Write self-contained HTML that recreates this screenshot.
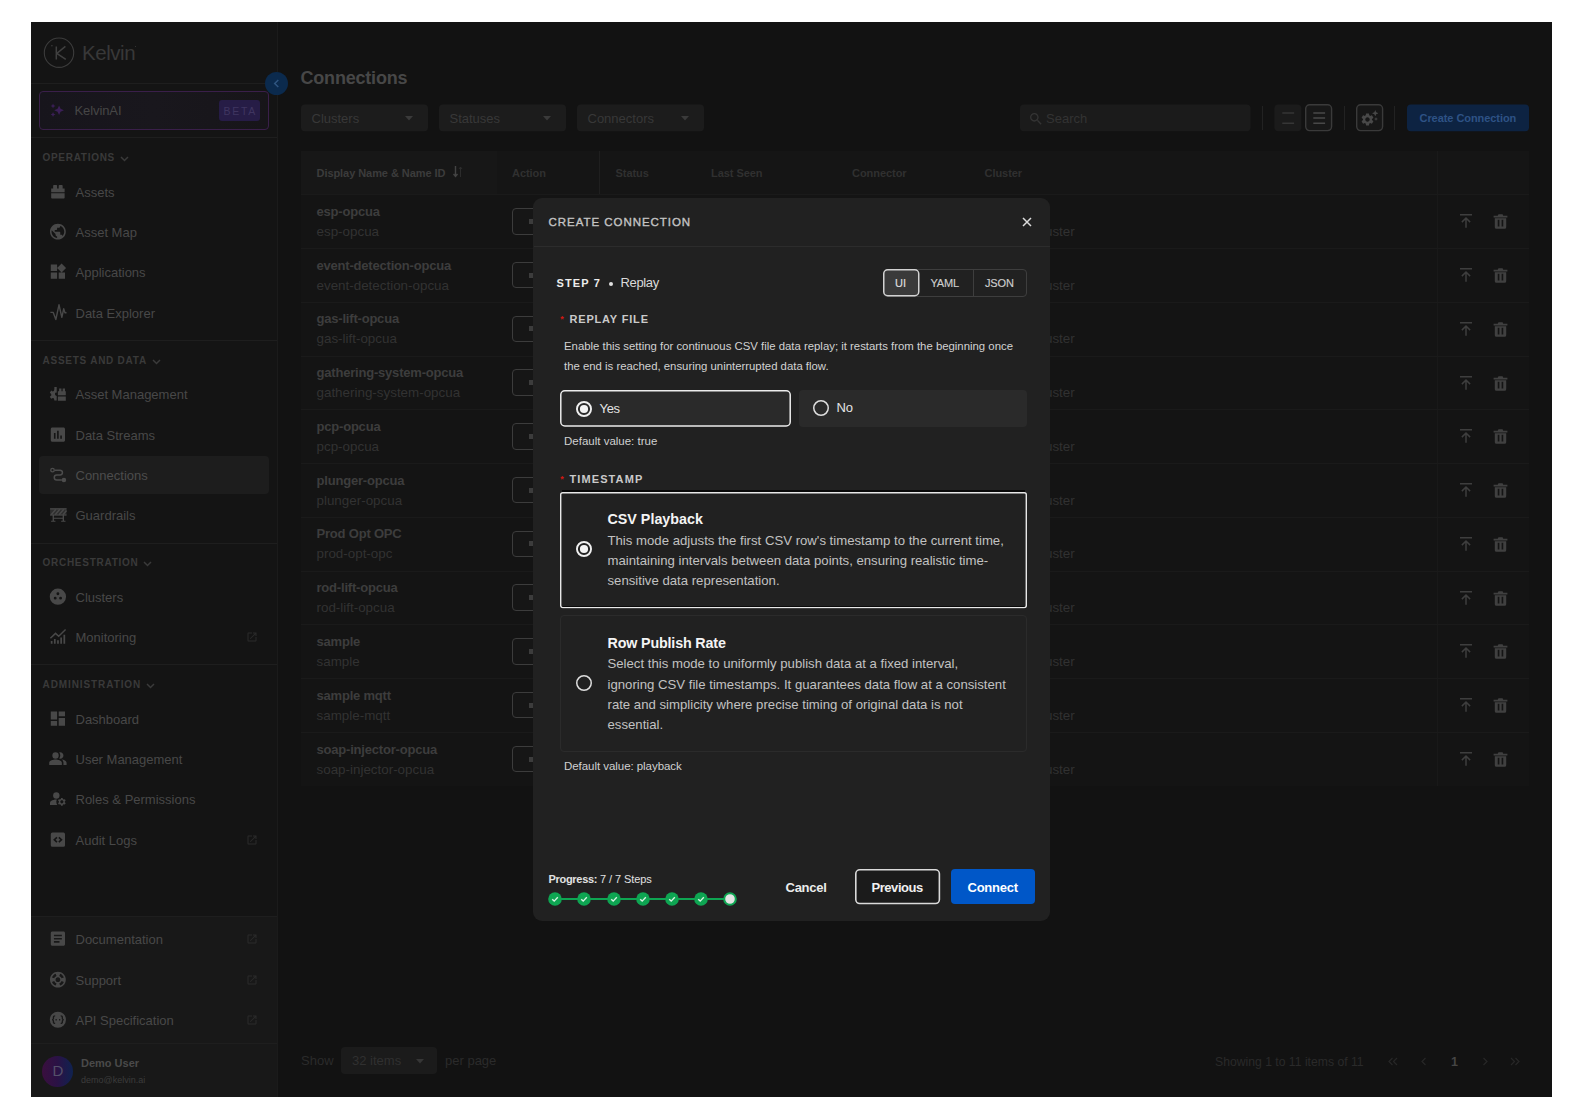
<!DOCTYPE html>
<html lang="en"><head><meta charset="utf-8"><title>Kelvin - Connections</title>
<style>
*{box-sizing:border-box}
html,body{margin:0;padding:0;background:#fff}
body{width:1584px;height:1120px;overflow:hidden;position:relative;font-family:"Liberation Sans",sans-serif;font-size:13px;color:#4a4a4a}
.a{position:absolute}
.t{position:absolute;white-space:nowrap;line-height:1}
#app{left:31px;top:22px;width:1521px;height:1075px;background:#121212}
#side{left:31px;top:22px;width:247px;height:1075px;background:#141414;border-right:1px solid #1b1b1b}
.hl{position:absolute;left:31px;width:246px;height:1px;background:#1e1e1e}
.sec{position:absolute;left:42.500px;font-size:10px;font-weight:700;letter-spacing:.680px;color:#3a3a3a;line-height:10px;white-space:nowrap}
.sec svg{position:absolute;top:1.500px}
.it{position:absolute;left:39px;width:230px;height:37px;border-radius:4px;color:#484848}
.it .ic{position:absolute;left:9.500px;top:9px;transform:translate(-.600px,-.800px)}
.it .ic svg{display:block}
.it .tx{position:absolute;left:36.500px;top:0;line-height:37px;font-size:13px;white-space:nowrap}
.it .ex{position:absolute;left:206.800px;top:12px;color:#2a2a2a}
.it .ex svg{display:block}
.it.on{color:#4c4c4c}
</style></head><body>
<div class="a" id="app"></div>
<div class="a" id="side"></div>
<div class="a" style="left:31px;top:916px;width:246px;height:181px;background:#181818"></div>

<svg class="a" style="left:43px;top:37px" width="32" height="32" viewBox="0 0 32 32"><circle cx="16" cy="15.700" r="14.700" fill="none" stroke="#3c3c3c" stroke-width="1.100"/><path d="M13.300 9.400v13M22.400 9.400l-8.600 7 9 6" fill="none" stroke="#404040" stroke-width="1.500"/><circle cx="8.900" cy="8.800" r=".7" fill="#404040"/></svg>
<div class="t" style="left:82px;top:41px;font-size:20.500px;color:#383838;letter-spacing:-.450px;line-height:24px">Kelvin</div>
<div class="a" style="left:134.500px;top:45.500px;width:1.500px;height:1.500px;border-radius:50%;background:#3c3c3c"></div>
<div class="hl" style="top:83px"></div>
<div class="hl" style="top:137px"></div>
<div class="hl" style="top:340px"></div>
<div class="hl" style="top:543px"></div>
<div class="hl" style="top:664px"></div>
<div class="hl" style="top:916px"></div>
<div class="hl" style="top:1043px"></div>
<div class="a" style="left:39px;top:91px;width:230px;height:39px;border:1px solid #3a1f4a;border-radius:4px;background:linear-gradient(90deg,#17151c,#19171d 50%,#171519)"></div>
<svg class="a" style="left:49.500px;top:102.500px;transform:scaleX(-1)" width="14.500" height="14.500" viewBox="0 0 24 24" fill="#3b1f57"><path d="M19 9l1.25-2.75L23 5l-2.75-1.25L19 1l-1.25 2.75L15 5l2.75 1.25L19 9zm-7.500.5L9 4 6.500 9.500 1 12l5.500 2.500L9 20l2.500-5.500L17 12l-5.500-2.500zM19 15l-1.25 2.750L15 19l2.750 1.250L19 23l1.250-2.750L23 19l-2.750-1.250L19 15z"/></svg>
<div class="t" style="left:74.500px;top:103.500px;font-size:13px;color:#464646;letter-spacing:-.1px;line-height:14px">KelvinAI</div>
<div class="a" style="left:219px;top:100px;width:40.500px;height:21px;border-radius:3px;background:#261c46"></div>
<div class="t" style="left:223.500px;top:105.500px;font-size:10.500px;color:#3f3560;letter-spacing:1.700px;line-height:11px">BETA</div>
<div class="a" style="left:265px;top:72px;width:23px;height:23px;border-radius:50%;background:#0b2a4d"></div>
<svg class="a" style="left:271px;top:78px" width="11" height="11" viewBox="0 0 11 11"><path d="M7.300 2L3.700 5.500 7.300 9" fill="none" stroke="#2f5580" stroke-width="1.500"/></svg>
<div class="a" style="left:39px;top:456.200px;width:230px;height:37.700px;border-radius:4px;background:#1d1d1d"></div>
<div class="sec" style="top:153px;letter-spacing:0.71px">OPERATIONS<svg style="left:77px" width="9" height="8" viewBox="0 0 9 8"><path d="M1 2l3.500 3.500L8 2" fill="none" stroke="#3a3a3a" stroke-width="1.500"/></svg></div>
<div class="it" style="top:173.5px"><span class="ic"><svg width="19" height="19" viewBox="0 0 24 24" fill="currentColor" style=""><path d="M3.500 8h17v4.600h-17zM3.500 14.100h17v5.500a1 1 0 0 1-1 1h-15a1 1 0 0 1-1-1zM6 4.400a1 1 0 0 1 1-1h3a1 1 0 0 1 1 1V8H6zM13 4.400a1 1 0 0 1 1-1h3a1 1 0 0 1 1 1V8h-5z"/></svg></span><span class="tx">Assets</span></div>
<div class="it" style="top:213.9px"><span class="ic"><svg width="19" height="19" viewBox="0 0 24 24" fill="currentColor" style=""><path d="M12 2C6.48 2 2 6.48 2 12s4.48 10 10 10 10-4.48 10-10S17.52 2 12 2zm-1 17.93c-3.95-.49-7-3.85-7-7.93 0-.62.08-1.21.21-1.79L9 15v1c0 1.1.9 2 2 2v1.93zm6.9-2.54c-.26-.81-1-1.39-1.9-1.39h-1v-3c0-.55-.45-1-1-1H8v-2h2c.55 0 1-.45 1-1V7h2c1.1 0 2-.9 2-2v-.41c2.93 1.19 5 4.06 5 7.41 0 2.08-.8 3.97-2.1 5.39z"/></svg></span><span class="tx">Asset Map</span></div>
<div class="it" style="top:254.3px"><span class="ic"><svg width="19" height="19" viewBox="0 0 24 24" fill="currentColor" style=""><path d="M13 13v8h8v-8h-8zM3 21h8v-8H3v8zM3 3v8h8V3H3zm13.66-1.31L11 7.34 16.66 13l5.66-5.66-5.66-5.65z"/></svg></span><span class="tx">Applications</span></div>
<div class="it" style="top:294.7px"><span class="ic"><svg width="19" height="19" viewBox="0 0 24 24" fill="currentColor" style=""><path d="M2.500 11.600H6.100L9.400 20.600 13.350 2 17 17.900 19.300 7.100 20.900 12.100H22.900" fill="none" stroke="currentColor" stroke-width="1.800" stroke-linejoin="round"/></svg></span><span class="tx">Data Explorer</span></div>
<div class="sec" style="top:356px;letter-spacing:0.75px">ASSETS AND DATA<svg style="left:109px" width="9" height="8" viewBox="0 0 9 8"><path d="M1 2l3.500 3.500L8 2" fill="none" stroke="#3a3a3a" stroke-width="1.500"/></svg></div>
<div class="it" style="top:376.2px"><span class="ic"><svg width="19" height="19" viewBox="0 0 24 24" fill="currentColor" style=""><path d="M12 9h10v5H12zM12 15.500h10V21H12zM13.500 5.500h3V9h-3zM18 5.500h3V9h-3z"/><path d="M10.500 3.500v17h-3l-.4-2.300-1.500-.8-2.100 1-1.700-2.700 1.800-1.500v-1.900L1.800 10.800l1.700-2.700 2.100 1 1.500-.8.400-2.300V3.500zM10.500 10.200a2.300 2.300 0 0 0 0 4.600z" fill-rule="evenodd"/></svg></span><span class="tx">Asset Management</span></div>
<div class="it" style="top:416.5px"><span class="ic"><svg width="19" height="19" viewBox="0 0 24 24" fill="currentColor" style=""><path d="M19 3H5c-1.1 0-2 .9-2 2v14c0 1.1.9 2 2 2h14c1.1 0 2-.9 2-2V5c0-1.1-.9-2-2-2zM9 17H7v-7h2v7zm4 0h-2V7h2v10zm4 0h-2v-4h2v4z"/></svg></span><span class="tx">Data Streams</span></div>
<div class="it on" style="top:457.0px"><span class="ic"><svg width="19" height="19" viewBox="0 0 24 24" fill="currentColor" style=""><circle cx="5.200" cy="6.300" r="2.200" fill="none" stroke="currentColor" stroke-width="1.700"/><path d="M7.800 6.300H14.700a3.050 3.050 0 0 1 0 6.100H10.500a3.100 3.100 0 0 0 0 6.200H17" fill="none" stroke="currentColor" stroke-width="1.900"/><circle cx="19.600" cy="18.600" r="2.900"/></svg></span><span class="tx">Connections</span></div>
<div class="it" style="top:497.20000000000005px"><span class="ic"><svg width="19" height="19" viewBox="0 0 24 24" fill="currentColor" style=""><path d="M2.100 4h20.800v9H2.100z" opacity=".5"/><path d="M2.100 3.900h20.800v1.500H2.100zM2.100 11.600h20.800v1.500H2.100zM5.300 13h1.700v8H5.300zM18 13h1.700v8H18zM3.400 19.700h5.500V21H3.400zM16.100 19.700h5.500V21h-5.500zM5.300 15.800h14.400v1.400H5.300z"/><path d="M3.500 12l6-7M8.500 12l6-7M13.500 12l6-7M18.500 12l4.400-5.200" stroke="currentColor" stroke-width="1.900" fill="none"/></svg></span><span class="tx">Guardrails</span></div>
<div class="sec" style="top:558px;letter-spacing:0.73px">ORCHESTRATION<svg style="left:100px" width="9" height="8" viewBox="0 0 9 8"><path d="M1 2l3.500 3.500L8 2" fill="none" stroke="#3a3a3a" stroke-width="1.500"/></svg></div>
<div class="it" style="top:579.0px"><span class="ic"><svg width="19" height="19" viewBox="0 0 24 24" fill="currentColor" style=""><path fill-rule="evenodd" d="M12 1.700a10.300 10.300 0 1 0 0 20.600 10.300 10.300 0 0 0 0-20.600zm0 4.800a1.800 1.800 0 1 1 0 3.600 1.800 1.800 0 0 1 0-3.600zM8.600 12a1.800 1.800 0 1 1 0 3.600 1.800 1.800 0 0 1 0-3.600zm6.800 0a1.800 1.800 0 1 1 0 3.600 1.800 1.800 0 0 1 0-3.600z"/></svg></span><span class="tx">Clusters</span></div>
<div class="it" style="top:619.3px"><span class="ic"><svg width="19" height="19" viewBox="0 0 24 24" fill="currentColor" style=""><path d="M3 17.500h2.200V21H3zM7 15h2.200v6H7zM11 16.500h2.200V21H11zM15 13h2.200v8H15zM19 9.500h2.200V21H19z"/><path d="M2.500 14L9 7.800l4 3.700L21.700 3" fill="none" stroke="currentColor" stroke-width="1.900"/></svg></span><span class="tx">Monitoring</span><span class="ex"><svg width="12" height="12" viewBox="0 0 24 24" fill="currentColor" style=""><path d="M19 19H5V5h7V3H5c-1.11 0-2 .9-2 2v14c0 1.1.89 2 2 2h14c1.1 0 2-.9 2-2v-7h-2v7zM14 3v2h3.59l-9.83 9.83 1.41 1.41L19 6.41V10h2V3h-7z"/></svg></span></div>
<div class="sec" style="top:680px;letter-spacing:0.91px">ADMINISTRATION<svg style="left:103px" width="9" height="8" viewBox="0 0 9 8"><path d="M1 2l3.500 3.500L8 2" fill="none" stroke="#3a3a3a" stroke-width="1.500"/></svg></div>
<div class="it" style="top:700.5px"><span class="ic"><svg width="19" height="19" viewBox="0 0 24 24" fill="currentColor" style=""><path d="M3 13h8V3H3v10zm0 8h8v-6H3v6zm10 0h8V11h-8v10zm0-18v6h8V3h-8z"/></svg></span><span class="tx">Dashboard</span></div>
<div class="it" style="top:740.9px"><span class="ic"><svg width="19" height="19" viewBox="0 0 24 24" fill="currentColor" style=""><path d="M16.670 13.130C18.040 14.060 19 15.320 19 17v3h4v-3c0-2.180-3.570-3.470-6.330-3.870z"/><circle cx="9" cy="8" r="4"/><path d="M15 12c2.210 0 4-1.790 4-4s-1.790-4-4-4c-.470 0-.910.100-1.330.240C14.500 5.270 15 6.580 15 8s-.500 2.730-1.330 3.760c.420.140.860.240 1.330.240zM9 13c-2.670 0-8 1.340-8 4v3h16v-3c0-2.660-5.330-4-8-4z"/></svg></span><span class="tx">User Management</span></div>
<div class="it" style="top:781.2px"><span class="ic"><svg width="19" height="19" viewBox="0 0 24 24" fill="currentColor" style=""><circle cx="10" cy="8" r="4"/><path d="M10.670 13.020c-.220-.010-.440-.020-.670-.020-2.420 0-4.680.670-6.610 1.820-.880.520-1.390 1.500-1.390 2.530V20h9.260c-.790-1.130-1.260-2.510-1.260-4 0-1.070.250-2.070.670-2.980zM20.750 16c0-.220-.030-.420-.060-.630l1.140-1.010-1-1.730-1.450.490c-.320-.270-.680-.480-1.080-.630L18 11h-2l-.300 1.490c-.400.150-.760.360-1.080.630l-1.450-.490-1 1.730 1.140 1.010c-.030.210-.060.410-.060.630s.030.420.060.630l-1.140 1.010 1 1.730 1.450-.490c.320.270.680.480 1.080.630L16 21h2l.300-1.490c.400-.150.760-.360 1.080-.630l1.450.490 1-1.730-1.140-1.010c.030-.210.060-.410.060-.630zM17 18c-1.100 0-2-.900-2-2s.900-2 2-2 2 .900 2 2-.900 2-2 2z"/></svg></span><span class="tx">Roles &amp; Permissions</span></div>
<div class="it" style="top:821.5px"><span class="ic"><svg width="19" height="19" viewBox="0 0 24 24" fill="currentColor" style=""><path fill-rule="evenodd" d="M5 3h14a2 2 0 0 1 2 2v14a2 2 0 0 1-2 2H5a2 2 0 0 1-2-2V5a2 2 0 0 1 2-2zm5.100 5.200L6 12l4.100 3.800 1.400-1.500L9 12l2.500-2.300zm3.800 0l-1.400 1.500L15 12l-2.500 2.300 1.400 1.500L18 12z"/></svg></span><span class="tx">Audit Logs</span><span class="ex"><svg width="12" height="12" viewBox="0 0 24 24" fill="currentColor" style=""><path d="M19 19H5V5h7V3H5c-1.11 0-2 .9-2 2v14c0 1.1.89 2 2 2h14c1.1 0 2-.9 2-2v-7h-2v7zM14 3v2h3.59l-9.83 9.83 1.41 1.41L19 6.41V10h2V3h-7z"/></svg></span></div>
<div class="it" style="top:921.2px"><span class="ic"><svg width="19" height="19" viewBox="0 0 24 24" fill="currentColor" style=""><path d="M19 3H5c-1.1 0-2 .9-2 2v14c0 1.1.9 2 2 2h14c1.1 0 2-.9 2-2V5c0-1.1-.9-2-2-2zm-5 14H7v-2h7v2zm3-4H7v-2h10v2zm0-4H7V7h10v2z"/></svg></span><span class="tx">Documentation</span><span class="ex"><svg width="12" height="12" viewBox="0 0 24 24" fill="currentColor" style=""><path d="M19 19H5V5h7V3H5c-1.11 0-2 .9-2 2v14c0 1.1.89 2 2 2h14c1.1 0 2-.9 2-2v-7h-2v7zM14 3v2h3.59l-9.83 9.83 1.41 1.41L19 6.41V10h2V3h-7z"/></svg></span></div>
<div class="it" style="top:961.7px"><span class="ic"><svg width="19" height="19" viewBox="0 0 24 24" fill="currentColor" style=""><path d="M12 2C6.48 2 2 6.48 2 12s4.48 10 10 10 10-4.48 10-10S17.52 2 12 2zm7.46 7.12l-2.78 1.15c-.51-1.36-1.58-2.44-2.95-2.94l1.15-2.78c2.1.8 3.77 2.47 4.58 4.57zM12 15c-1.66 0-3-1.34-3-3s1.34-3 3-3 3 1.34 3 3-1.34 3-3 3zM9.13 4.54l1.17 2.78c-1.38.5-2.47 1.59-2.98 2.97L4.54 9.13c.81-2.11 2.48-3.78 4.59-4.59zM4.54 14.87l2.78-1.15c.51 1.38 1.59 2.46 2.97 2.96l-1.17 2.78c-2.1-.81-3.77-2.48-4.58-4.59zm10.34 4.59l-1.15-2.78c1.37-.51 2.45-1.59 2.95-2.97l2.78 1.17c-.81 2.1-2.48 3.77-4.58 4.58z"/></svg></span><span class="tx">Support</span><span class="ex"><svg width="12" height="12" viewBox="0 0 24 24" fill="currentColor" style=""><path d="M19 19H5V5h7V3H5c-1.11 0-2 .9-2 2v14c0 1.1.89 2 2 2h14c1.1 0 2-.9 2-2v-7h-2v7zM14 3v2h3.59l-9.83 9.83 1.41 1.41L19 6.41V10h2V3h-7z"/></svg></span></div>
<div class="it" style="top:1001.9px"><span class="ic"><svg width="19" height="19" viewBox="0 0 24 24" fill="currentColor" style=""><path fill-rule="evenodd" d="M12 1.800a10.200 10.200 0 1 0 0 20.400 10.200 10.200 0 0 0 0-20.400zM8.500 6.500v1.600c-1 0-1.300.4-1.300 1.200v1.200c0 .8-.4 1.300-1 1.500.6.200 1 .7 1 1.500v1.200c0 .8.300 1.200 1.300 1.200v1.600c-2 0-3-.9-3-2.600v-1.300c0-.7-.4-1-1-1v-1.200c.6 0 1-.3 1-1V9.100c0-1.700 1-2.600 3-2.600zm7 0c2 0 3 .9 3 2.600v1.300c0 .7.400 1 1 1v1.200c-.6 0-1 .3-1 1v1.300c0 1.700-1 2.600-3 2.600v-1.600c1 0 1.300-.4 1.300-1.200v-1.200c0-.8.400-1.300 1-1.500-.6-.2-1-.7-1-1.500V9.300c0-.8-.3-1.200-1.300-1.200zM9 11h1.600v2H9zm4.400 0H15v2h-1.600z"/></svg></span><span class="tx">API Specification</span><span class="ex"><svg width="12" height="12" viewBox="0 0 24 24" fill="currentColor" style=""><path d="M19 19H5V5h7V3H5c-1.11 0-2 .9-2 2v14c0 1.1.89 2 2 2h14c1.1 0 2-.9 2-2v-7h-2v7zM14 3v2h3.59l-9.83 9.83 1.41 1.41L19 6.41V10h2V3h-7z"/></svg></span></div>
<div class="a" style="left:42px;top:1055.500px;width:31px;height:31px;border-radius:50%;background:linear-gradient(90deg,#3a0f3e,#2a1245 50%,#0f2250)"></div>
<div class="t" style="left:52.500px;top:1063px;font-size:15px;color:#55506a;line-height:16px">D</div>
<div class="t" style="left:81px;top:1056.500px;font-size:11px;font-weight:700;color:#4a4a4a;line-height:12px">Demo User</div>
<div class="t" style="left:81px;top:1075px;font-size:9px;color:#3c3c3c;line-height:10px">demo@kelvin.ai</div>
<div class="t" style="left:300.500px;top:68px;font-size:18px;font-weight:700;color:#474747;letter-spacing:-.200px;line-height:20px">Connections</div>
<svg class="a" style="left:300px;top:103px" width="131" height="30" viewBox="0 0 131 30"><rect x="1.00" y="1.45" width="127" height="26.9" rx="4" fill="#1c1c1c"/></svg>
<div class="t" style="left:311.5px;top:111.700px;font-size:13px;color:#383838;line-height:14px">Clusters</div>
<svg class="a" style="left:405px;top:116px" width="8" height="5" viewBox="0 0 8 5"><path d="M0 0h8L4 4.500z" fill="#3a3a3a"/></svg>
<svg class="a" style="left:438px;top:103px" width="131" height="30" viewBox="0 0 131 30"><rect x="1.00" y="1.45" width="127" height="26.9" rx="4" fill="#1c1c1c"/></svg>
<div class="t" style="left:449.5px;top:111.700px;font-size:13px;color:#383838;line-height:14px">Statuses</div>
<svg class="a" style="left:543px;top:116px" width="8" height="5" viewBox="0 0 8 5"><path d="M0 0h8L4 4.500z" fill="#3a3a3a"/></svg>
<svg class="a" style="left:576px;top:103px" width="131" height="30" viewBox="0 0 131 30"><rect x="1.00" y="1.45" width="127" height="26.9" rx="4" fill="#1c1c1c"/></svg>
<div class="t" style="left:587.5px;top:111.700px;font-size:13px;color:#383838;line-height:14px">Connectors</div>
<svg class="a" style="left:681px;top:116px" width="8" height="5" viewBox="0 0 8 5"><path d="M0 0h8L4 4.500z" fill="#3a3a3a"/></svg>
<svg class="a" style="left:1019px;top:103px" width="234" height="30" viewBox="0 0 234 30"><rect x="1.00" y="1.45" width="230.5" height="26.9" rx="4" fill="#1b1b1b"/></svg>
<svg class="a" style="left:1028.300px;top:110.500px" width="16" height="16" viewBox="0 0 24 24" fill="#343434"><path d="M15.5 14h-.79l-.28-.27C15.41 12.59 16 11.11 16 9.500 16 5.910 13.090 3 9.500 3S3 5.910 3 9.500 5.910 16 9.500 16c1.610 0 3.090-.590 4.230-1.570l.270.280v.790l5 4.990L20.490 19l-4.990-5zm-6 0C7.010 14 5 11.990 5 9.500S7.010 5 9.500 5 14 7.010 14 9.500 11.990 14 9.500 14z"/></svg>
<div class="t" style="left:1046px;top:111.700px;font-size:13px;color:#333;line-height:14px">Search</div>
<div class="a" style="left:1261.9px;top:106px;width:1px;height:24px;background:#222"></div>
<div class="a" style="left:1343.5px;top:106px;width:1px;height:24px;background:#222"></div>
<div class="a" style="left:1394.4px;top:106px;width:1px;height:24px;background:#222"></div>
<svg class="a" style="left:1273px;top:103px" width="31" height="30" viewBox="0 0 31 30"><rect x="1.40" y="1.45" width="27" height="26.9" rx="4" fill="#1b1b1b"/></svg>
<svg class="a" style="left:1281px;top:111px" width="14" height="14" viewBox="0 0 14 14"><path d="M1.300 1.900h11.800M1.300 12.300h11.800" stroke="#363636" stroke-width="1.500"/></svg>
<svg class="a" style="left:1304px;top:103.3px" width="29.3" height="29.3" viewBox="0 0 29.3 29.3"><rect x="1.7" y="1.7" width="25.900000000000002" height="25.900000000000002" rx="4" fill="#181818" stroke="#3a3a3a" stroke-width="1.4"/></svg>
<svg class="a" style="left:1311.500px;top:111px" width="14" height="14" viewBox="0 0 14 14"><path d="M1.300 1.900h11.800M1.300 7.100h11.800M1.300 12.300h11.800" stroke="#484848" stroke-width="1.500"/></svg>
<svg class="a" style="left:1355px;top:103.3px" width="29.3" height="29.3" viewBox="0 0 29.3 29.3"><rect x="1.7" y="1.7" width="25.900000000000002" height="25.900000000000002" rx="4" fill="#171717" stroke="#3a3a3a" stroke-width="1.4"/></svg>
<svg class="a" style="left:1360.300px;top:112px" width="15" height="15" viewBox="0 0 24 24" fill="#484848"><path d="M19.14 12.94c.04-.3.06-.61.06-.94 0-.32-.02-.64-.07-.94l2.03-1.58c.18-.14.23-.41.12-.61l-1.92-3.32c-.12-.22-.37-.29-.59-.22l-2.39.96c-.5-.38-1.03-.7-1.62-.94l-.36-2.54c-.04-.24-.24-.41-.48-.41h-3.84c-.24 0-.43.17-.47.41l-.36 2.54c-.59.24-1.13.57-1.62.94l-2.39-.96c-.22-.08-.47 0-.59.22L2.74 8.87c-.12.21-.08.47.12.61l2.03 1.58c-.05.3-.09.63-.09.94s.02.64.07.94l-2.03 1.58c-.18.14-.23.41-.12.61l1.92 3.32c.12.22.37.29.59.22l2.39-.96c.5.38 1.03.7 1.62.94l.36 2.54c.05.24.24.41.48.41h3.84c.24 0 .44-.17.47-.41l.36-2.54c.59-.24 1.13-.56 1.62-.94l2.39.96c.22.08.47 0 .59-.22l1.92-3.32c.12-.22.07-.47-.12-.61l-2.01-1.58zM12 15.6c-1.98 0-3.6-1.62-3.6-3.6s1.62-3.6 3.6-3.6 3.6 1.62 3.6 3.6-1.62 3.6-3.6 3.6z"/></svg>
<svg class="a" style="left:1371.500px;top:109.500px" width="6.500" height="6.500" viewBox="0 0 8 8" fill="#484848"><path d="M4 0l1.100 2.900L8 4 5.100 5.100 4 8 2.900 5.100 0 4l2.900-1.100z"/></svg>
<svg class="a" style="left:1374.300px;top:117.300px" width="4" height="4" viewBox="0 0 8 8" fill="#484848"><path d="M4 0l1.100 2.900L8 4 5.100 5.100 4 8 2.900 5.100 0 4l2.900-1.100z"/></svg>
<svg class="a" style="left:1406px;top:103px" width="126" height="30" viewBox="0 0 126 30"><rect x="1.00" y="1.45" width="122" height="26.9" rx="4" fill="#0d2342"/></svg>
<div class="t" style="left:1419.500px;top:112px;font-size:11px;font-weight:700;color:#2e5285;line-height:12px;letter-spacing:-.060px">Create Connection</div>
<div class="a" style="left:301px;top:150.500px;width:1228px;height:635.500px;background:#141414"></div>
<div class="a" style="left:301px;top:150.500px;width:195.500px;height:635.500px;background:#141414"></div>
<div class="a" style="left:301px;top:150.500px;width:195.500px;height:44px;background:#161616"></div>
<div class="a" style="left:1437px;top:150.500px;width:92px;height:635.500px;background:#141414;border-left:1px solid #191919"></div>
<div class="a" style="left:599px;top:150.500px;width:1px;height:44px;background:#1e1e1e"></div>
<div class="a" style="left:301px;top:150.500px;width:1228px;height:44px;background:rgba(255,255,255,.008)"></div>
<div class="t" style="left:316.500px;top:167px;font-size:11px;font-weight:700;color:#3c3c3c;line-height:12px;letter-spacing:-.060px">Display Name &amp; Name ID</div>
<svg class="a" style="left:452.500px;top:166px" width="10" height="12" viewBox="0 0 10 12"><path d="M2.500 0v10M.500 8l2 2.500 2-2.500" fill="none" stroke="#444" stroke-width="1.400"/><path d="M7.500 11V1M6 3l1.500-2L9 3" fill="none" stroke="#2c2c2c" stroke-width="1"/></svg>
<div class="t" style="left:512px;top:167px;font-size:11px;font-weight:700;color:#303030;line-height:12px;letter-spacing:-.050px">Action</div>
<div class="t" style="left:615.5px;top:167px;font-size:11px;font-weight:700;color:#303030;line-height:12px;letter-spacing:-.050px">Status</div>
<div class="t" style="left:711px;top:167px;font-size:11px;font-weight:700;color:#303030;line-height:12px;letter-spacing:-.050px">Last Seen</div>
<div class="t" style="left:852px;top:167px;font-size:11px;font-weight:700;color:#303030;line-height:12px;letter-spacing:-.050px">Connector</div>
<div class="t" style="left:984.5px;top:167px;font-size:11px;font-weight:700;color:#303030;line-height:12px;letter-spacing:-.050px">Cluster</div>
<div class="a" style="left:301px;top:194.30px;width:1228px;height:1px;background:#1a1a1a"></div>
<div class="t" style="left:316.500px;top:204.80px;font-size:13px;font-weight:700;color:#3d3d3d;line-height:14px;letter-spacing:-.200px">esp-opcua</div>
<div class="t" style="left:316.500px;top:224.80px;font-size:13.400px;color:#323232;line-height:14px">esp-opcua</div>
<div class="a" style="left:512px;top:208.00px;width:64px;height:26.500px;border:1px solid #3c3c3c;border-radius:4px;background:#161616"></div>
<div class="a" style="left:528.500px;top:218.80px;width:5px;height:5px;background:#3c3c3c"></div>
<div class="t" style="left:1035.300px;top:224.80px;font-size:13.400px;color:#313131;line-height:14px">cluster</div>
<svg class="a" style="left:1456.500px;top:212.30px" width="18" height="18" viewBox="0 0 24 24"><path d="M4 3.500h16M12 21V8.500M6.500 13.500L12 8l5.500 5.500" fill="none" stroke="#3e3e3e" stroke-width="2"/></svg>
<svg class="a" style="left:1490.500px;top:212.30px" width="19" height="19" viewBox="0 0 24 24"><path fill-rule="evenodd" d="M3.300 4.600h5.200l.9-1.800h5.200l.9 1.800h5.200v2.300H3.300zM4.800 7.800h14.400v11.400a2 2 0 0 1-2 2H6.800a2 2 0 0 1-2-2zm3.700 2v8.600h2.100V9.800zm4.900 0v8.600h2.100V9.800z" fill="#404040"/></svg>
<div class="a" style="left:301px;top:248.07px;width:1228px;height:1px;background:#1a1a1a"></div>
<div class="t" style="left:316.500px;top:258.57px;font-size:13px;font-weight:700;color:#3d3d3d;line-height:14px;letter-spacing:-.200px">event-detection-opcua</div>
<div class="t" style="left:316.500px;top:278.57px;font-size:13.400px;color:#323232;line-height:14px">event-detection-opcua</div>
<div class="a" style="left:512px;top:261.77px;width:64px;height:26.500px;border:1px solid #3c3c3c;border-radius:4px;background:#161616"></div>
<div class="a" style="left:528.500px;top:272.57px;width:5px;height:5px;background:#3c3c3c"></div>
<div class="t" style="left:1035.300px;top:278.57px;font-size:13.400px;color:#313131;line-height:14px">cluster</div>
<svg class="a" style="left:1456.500px;top:266.07px" width="18" height="18" viewBox="0 0 24 24"><path d="M4 3.500h16M12 21V8.500M6.500 13.500L12 8l5.500 5.500" fill="none" stroke="#3e3e3e" stroke-width="2"/></svg>
<svg class="a" style="left:1490.500px;top:266.07px" width="19" height="19" viewBox="0 0 24 24"><path fill-rule="evenodd" d="M3.300 4.600h5.200l.9-1.800h5.200l.9 1.800h5.200v2.300H3.300zM4.800 7.800h14.400v11.400a2 2 0 0 1-2 2H6.800a2 2 0 0 1-2-2zm3.700 2v8.600h2.100V9.800zm4.900 0v8.600h2.100V9.800z" fill="#404040"/></svg>
<div class="a" style="left:301px;top:301.84px;width:1228px;height:1px;background:#1a1a1a"></div>
<div class="t" style="left:316.500px;top:312.34px;font-size:13px;font-weight:700;color:#3d3d3d;line-height:14px;letter-spacing:-.200px">gas-lift-opcua</div>
<div class="t" style="left:316.500px;top:332.34px;font-size:13.400px;color:#323232;line-height:14px">gas-lift-opcua</div>
<div class="a" style="left:512px;top:315.54px;width:64px;height:26.500px;border:1px solid #3c3c3c;border-radius:4px;background:#161616"></div>
<div class="a" style="left:528.500px;top:326.34px;width:5px;height:5px;background:#3c3c3c"></div>
<div class="t" style="left:1035.300px;top:332.34px;font-size:13.400px;color:#313131;line-height:14px">cluster</div>
<svg class="a" style="left:1456.500px;top:319.84px" width="18" height="18" viewBox="0 0 24 24"><path d="M4 3.500h16M12 21V8.500M6.500 13.500L12 8l5.500 5.500" fill="none" stroke="#3e3e3e" stroke-width="2"/></svg>
<svg class="a" style="left:1490.500px;top:319.84px" width="19" height="19" viewBox="0 0 24 24"><path fill-rule="evenodd" d="M3.300 4.600h5.200l.9-1.800h5.200l.9 1.800h5.200v2.300H3.300zM4.800 7.800h14.400v11.400a2 2 0 0 1-2 2H6.800a2 2 0 0 1-2-2zm3.700 2v8.600h2.100V9.800zm4.900 0v8.600h2.100V9.800z" fill="#404040"/></svg>
<div class="a" style="left:301px;top:355.61px;width:1228px;height:1px;background:#1a1a1a"></div>
<div class="t" style="left:316.500px;top:366.11px;font-size:13px;font-weight:700;color:#3d3d3d;line-height:14px;letter-spacing:-.200px">gathering-system-opcua</div>
<div class="t" style="left:316.500px;top:386.11px;font-size:13.400px;color:#323232;line-height:14px">gathering-system-opcua</div>
<div class="a" style="left:512px;top:369.31px;width:64px;height:26.500px;border:1px solid #3c3c3c;border-radius:4px;background:#161616"></div>
<div class="a" style="left:528.500px;top:380.11px;width:5px;height:5px;background:#3c3c3c"></div>
<div class="t" style="left:1035.300px;top:386.11px;font-size:13.400px;color:#313131;line-height:14px">cluster</div>
<svg class="a" style="left:1456.500px;top:373.61px" width="18" height="18" viewBox="0 0 24 24"><path d="M4 3.500h16M12 21V8.500M6.500 13.500L12 8l5.500 5.500" fill="none" stroke="#3e3e3e" stroke-width="2"/></svg>
<svg class="a" style="left:1490.500px;top:373.61px" width="19" height="19" viewBox="0 0 24 24"><path fill-rule="evenodd" d="M3.300 4.600h5.200l.9-1.800h5.200l.9 1.800h5.200v2.300H3.300zM4.800 7.800h14.400v11.400a2 2 0 0 1-2 2H6.800a2 2 0 0 1-2-2zm3.700 2v8.600h2.100V9.800zm4.900 0v8.600h2.100V9.800z" fill="#404040"/></svg>
<div class="a" style="left:301px;top:409.38px;width:1228px;height:1px;background:#1a1a1a"></div>
<div class="t" style="left:316.500px;top:419.88px;font-size:13px;font-weight:700;color:#3d3d3d;line-height:14px;letter-spacing:-.200px">pcp-opcua</div>
<div class="t" style="left:316.500px;top:439.88px;font-size:13.400px;color:#323232;line-height:14px">pcp-opcua</div>
<div class="a" style="left:512px;top:423.08px;width:64px;height:26.500px;border:1px solid #3c3c3c;border-radius:4px;background:#161616"></div>
<div class="a" style="left:528.500px;top:433.88px;width:5px;height:5px;background:#3c3c3c"></div>
<div class="t" style="left:1035.300px;top:439.88px;font-size:13.400px;color:#313131;line-height:14px">cluster</div>
<svg class="a" style="left:1456.500px;top:427.38px" width="18" height="18" viewBox="0 0 24 24"><path d="M4 3.500h16M12 21V8.500M6.500 13.500L12 8l5.500 5.500" fill="none" stroke="#3e3e3e" stroke-width="2"/></svg>
<svg class="a" style="left:1490.500px;top:427.38px" width="19" height="19" viewBox="0 0 24 24"><path fill-rule="evenodd" d="M3.300 4.600h5.200l.9-1.800h5.200l.9 1.800h5.200v2.300H3.300zM4.800 7.800h14.400v11.400a2 2 0 0 1-2 2H6.800a2 2 0 0 1-2-2zm3.700 2v8.600h2.100V9.800zm4.900 0v8.600h2.100V9.800z" fill="#404040"/></svg>
<div class="a" style="left:301px;top:463.15px;width:1228px;height:1px;background:#1a1a1a"></div>
<div class="t" style="left:316.500px;top:473.65px;font-size:13px;font-weight:700;color:#3d3d3d;line-height:14px;letter-spacing:-.200px">plunger-opcua</div>
<div class="t" style="left:316.500px;top:493.65px;font-size:13.400px;color:#323232;line-height:14px">plunger-opcua</div>
<div class="a" style="left:512px;top:476.85px;width:64px;height:26.500px;border:1px solid #3c3c3c;border-radius:4px;background:#161616"></div>
<div class="a" style="left:528.500px;top:487.65px;width:5px;height:5px;background:#3c3c3c"></div>
<div class="t" style="left:1035.300px;top:493.65px;font-size:13.400px;color:#313131;line-height:14px">cluster</div>
<svg class="a" style="left:1456.500px;top:481.15px" width="18" height="18" viewBox="0 0 24 24"><path d="M4 3.500h16M12 21V8.500M6.500 13.500L12 8l5.500 5.500" fill="none" stroke="#3e3e3e" stroke-width="2"/></svg>
<svg class="a" style="left:1490.500px;top:481.15px" width="19" height="19" viewBox="0 0 24 24"><path fill-rule="evenodd" d="M3.300 4.600h5.200l.9-1.800h5.200l.9 1.800h5.200v2.300H3.300zM4.800 7.800h14.400v11.400a2 2 0 0 1-2 2H6.800a2 2 0 0 1-2-2zm3.700 2v8.600h2.100V9.800zm4.900 0v8.600h2.100V9.800z" fill="#404040"/></svg>
<div class="a" style="left:301px;top:516.92px;width:1228px;height:1px;background:#1a1a1a"></div>
<div class="t" style="left:316.500px;top:527.42px;font-size:13px;font-weight:700;color:#3d3d3d;line-height:14px;letter-spacing:-.200px">Prod Opt OPC</div>
<div class="t" style="left:316.500px;top:547.42px;font-size:13.400px;color:#323232;line-height:14px">prod-opt-opc</div>
<div class="a" style="left:512px;top:530.62px;width:64px;height:26.500px;border:1px solid #3c3c3c;border-radius:4px;background:#161616"></div>
<div class="a" style="left:528.500px;top:541.42px;width:5px;height:5px;background:#3c3c3c"></div>
<div class="t" style="left:1035.300px;top:547.42px;font-size:13.400px;color:#313131;line-height:14px">cluster</div>
<svg class="a" style="left:1456.500px;top:534.92px" width="18" height="18" viewBox="0 0 24 24"><path d="M4 3.500h16M12 21V8.500M6.500 13.500L12 8l5.500 5.500" fill="none" stroke="#3e3e3e" stroke-width="2"/></svg>
<svg class="a" style="left:1490.500px;top:534.92px" width="19" height="19" viewBox="0 0 24 24"><path fill-rule="evenodd" d="M3.300 4.600h5.200l.9-1.800h5.200l.9 1.800h5.200v2.300H3.300zM4.800 7.800h14.400v11.400a2 2 0 0 1-2 2H6.800a2 2 0 0 1-2-2zm3.700 2v8.600h2.100V9.800zm4.900 0v8.600h2.100V9.800z" fill="#404040"/></svg>
<div class="a" style="left:301px;top:570.69px;width:1228px;height:1px;background:#1a1a1a"></div>
<div class="t" style="left:316.500px;top:581.19px;font-size:13px;font-weight:700;color:#3d3d3d;line-height:14px;letter-spacing:-.200px">rod-lift-opcua</div>
<div class="t" style="left:316.500px;top:601.19px;font-size:13.400px;color:#323232;line-height:14px">rod-lift-opcua</div>
<div class="a" style="left:512px;top:584.39px;width:64px;height:26.500px;border:1px solid #3c3c3c;border-radius:4px;background:#161616"></div>
<div class="a" style="left:528.500px;top:595.19px;width:5px;height:5px;background:#3c3c3c"></div>
<div class="t" style="left:1035.300px;top:601.19px;font-size:13.400px;color:#313131;line-height:14px">cluster</div>
<svg class="a" style="left:1456.500px;top:588.69px" width="18" height="18" viewBox="0 0 24 24"><path d="M4 3.500h16M12 21V8.500M6.500 13.500L12 8l5.500 5.500" fill="none" stroke="#3e3e3e" stroke-width="2"/></svg>
<svg class="a" style="left:1490.500px;top:588.69px" width="19" height="19" viewBox="0 0 24 24"><path fill-rule="evenodd" d="M3.300 4.600h5.200l.9-1.800h5.200l.9 1.800h5.200v2.300H3.300zM4.800 7.800h14.400v11.400a2 2 0 0 1-2 2H6.800a2 2 0 0 1-2-2zm3.700 2v8.600h2.100V9.800zm4.900 0v8.600h2.100V9.800z" fill="#404040"/></svg>
<div class="a" style="left:301px;top:624.46px;width:1228px;height:1px;background:#1a1a1a"></div>
<div class="t" style="left:316.500px;top:634.96px;font-size:13px;font-weight:700;color:#3d3d3d;line-height:14px;letter-spacing:-.200px">sample</div>
<div class="t" style="left:316.500px;top:654.96px;font-size:13.400px;color:#323232;line-height:14px">sample</div>
<div class="a" style="left:512px;top:638.16px;width:64px;height:26.500px;border:1px solid #3c3c3c;border-radius:4px;background:#161616"></div>
<div class="a" style="left:528.500px;top:648.96px;width:5px;height:5px;background:#3c3c3c"></div>
<div class="t" style="left:1035.300px;top:654.96px;font-size:13.400px;color:#313131;line-height:14px">cluster</div>
<svg class="a" style="left:1456.500px;top:642.46px" width="18" height="18" viewBox="0 0 24 24"><path d="M4 3.500h16M12 21V8.500M6.500 13.500L12 8l5.500 5.500" fill="none" stroke="#3e3e3e" stroke-width="2"/></svg>
<svg class="a" style="left:1490.500px;top:642.46px" width="19" height="19" viewBox="0 0 24 24"><path fill-rule="evenodd" d="M3.300 4.600h5.200l.9-1.800h5.200l.9 1.800h5.200v2.300H3.300zM4.800 7.800h14.400v11.400a2 2 0 0 1-2 2H6.800a2 2 0 0 1-2-2zm3.700 2v8.600h2.100V9.800zm4.900 0v8.600h2.100V9.800z" fill="#404040"/></svg>
<div class="a" style="left:301px;top:678.23px;width:1228px;height:1px;background:#1a1a1a"></div>
<div class="t" style="left:316.500px;top:688.73px;font-size:13px;font-weight:700;color:#3d3d3d;line-height:14px;letter-spacing:-.200px">sample mqtt</div>
<div class="t" style="left:316.500px;top:708.73px;font-size:13.400px;color:#323232;line-height:14px">sample-mqtt</div>
<div class="a" style="left:512px;top:691.93px;width:64px;height:26.500px;border:1px solid #3c3c3c;border-radius:4px;background:#161616"></div>
<div class="a" style="left:528.500px;top:702.73px;width:5px;height:5px;background:#3c3c3c"></div>
<div class="t" style="left:1035.300px;top:708.73px;font-size:13.400px;color:#313131;line-height:14px">cluster</div>
<svg class="a" style="left:1456.500px;top:696.23px" width="18" height="18" viewBox="0 0 24 24"><path d="M4 3.500h16M12 21V8.500M6.500 13.500L12 8l5.500 5.500" fill="none" stroke="#3e3e3e" stroke-width="2"/></svg>
<svg class="a" style="left:1490.500px;top:696.23px" width="19" height="19" viewBox="0 0 24 24"><path fill-rule="evenodd" d="M3.300 4.600h5.200l.9-1.800h5.200l.9 1.800h5.200v2.300H3.300zM4.800 7.800h14.400v11.400a2 2 0 0 1-2 2H6.800a2 2 0 0 1-2-2zm3.700 2v8.600h2.100V9.800zm4.900 0v8.600h2.100V9.800z" fill="#404040"/></svg>
<div class="a" style="left:301px;top:732.00px;width:1228px;height:1px;background:#1a1a1a"></div>
<div class="t" style="left:316.500px;top:742.50px;font-size:13px;font-weight:700;color:#3d3d3d;line-height:14px;letter-spacing:-.200px">soap-injector-opcua</div>
<div class="t" style="left:316.500px;top:762.50px;font-size:13.400px;color:#323232;line-height:14px">soap-injector-opcua</div>
<div class="a" style="left:512px;top:745.70px;width:64px;height:26.500px;border:1px solid #3c3c3c;border-radius:4px;background:#161616"></div>
<div class="a" style="left:528.500px;top:756.50px;width:5px;height:5px;background:#3c3c3c"></div>
<div class="t" style="left:1035.300px;top:762.50px;font-size:13.400px;color:#313131;line-height:14px">cluster</div>
<svg class="a" style="left:1456.500px;top:750.00px" width="18" height="18" viewBox="0 0 24 24"><path d="M4 3.500h16M12 21V8.500M6.500 13.500L12 8l5.500 5.500" fill="none" stroke="#3e3e3e" stroke-width="2"/></svg>
<svg class="a" style="left:1490.500px;top:750.00px" width="19" height="19" viewBox="0 0 24 24"><path fill-rule="evenodd" d="M3.300 4.600h5.200l.9-1.800h5.200l.9 1.800h5.200v2.300H3.300zM4.800 7.800h14.400v11.400a2 2 0 0 1-2 2H6.800a2 2 0 0 1-2-2zm3.700 2v8.600h2.100V9.800zm4.900 0v8.600h2.100V9.800z" fill="#404040"/></svg>
<div class="t" style="left:301px;top:1054px;font-size:13px;color:#2b2b2b;line-height:14px">Show</div>
<div class="a" style="left:341px;top:1047px;width:95.500px;height:27px;border-radius:4px;background:#1b1b1b"></div>
<div class="t" style="left:352px;top:1054px;font-size:13px;color:#303030;line-height:14px">32 items</div>
<svg class="a" style="left:415.500px;top:1058.500px" width="8" height="5" viewBox="0 0 8 5"><path d="M0 0h8L4 4.500z" fill="#363636"/></svg>
<div class="t" style="left:445px;top:1054px;font-size:13px;color:#2b2b2b;line-height:14px">per page</div>
<div class="t" style="left:1215px;top:1054.500px;font-size:12.200px;color:#2a2a2a;line-height:14px">Showing 1 to 11 items of 11</div>
<svg class="a" style="left:1388.0px;top:1056.500px;" width="10" height="9" viewBox="0 0 10 9"><path d="M4.500 1L1 4.500 4.500 8 M9 1L5.500 4.500 9 8" fill="none" stroke="#272727" stroke-width="1.200"/></svg>
<svg class="a" style="left:1420.5px;top:1056.500px;" width="6" height="9" viewBox="0 0 6 9"><path d="M4.500 1L1 4.500 4.500 8" fill="none" stroke="#272727" stroke-width="1.200"/></svg>
<svg class="a" style="left:1481.5px;top:1056.500px;transform:scaleX(-1)" width="6" height="9" viewBox="0 0 6 9"><path d="M4.500 1L1 4.500 4.500 8" fill="none" stroke="#272727" stroke-width="1.200"/></svg>
<svg class="a" style="left:1510.0px;top:1056.500px;transform:scaleX(-1)" width="10" height="9" viewBox="0 0 10 9"><path d="M4.500 1L1 4.500 4.500 8 M9 1L5.500 4.500 9 8" fill="none" stroke="#272727" stroke-width="1.200"/></svg>
<div class="t" style="left:1451px;top:1054.500px;font-size:12.500px;font-weight:700;color:#454545;line-height:14px">1</div>
<div class="a" style="left:533.200px;top:198.400px;width:516.700px;height:722.500px;border-radius:9px;background:#212121"></div>
<div class="t" style="left:548.500px;top:215.500px;font-size:11.500px;font-weight:400;-webkit-text-stroke:.350px #c4c4c4;color:#c4c4c4;letter-spacing:.960px;line-height:13px">CREATE CONNECTION</div>
<svg class="a" style="left:1021.500px;top:216.500px" width="10" height="10" viewBox="0 0 10 10"><path d="M1 1l8 8M9 1L1 9" stroke="#dcdcdc" stroke-width="1.500" fill="none"/></svg>
<div class="a" style="left:533.500px;top:245.500px;width:516.500px;height:1px;background:#2c2c2c"></div>
<div class="t" style="left:556.500px;top:277px;font-size:11px;font-weight:700;color:#ececec;letter-spacing:1.150px;line-height:12px">STEP 7</div>
<div class="a" style="left:609px;top:281.500px;width:4px;height:4px;border-radius:50%;background:#e0e0e0"></div>
<div class="t" style="left:620.500px;top:275px;font-size:13px;color:#dadada;letter-spacing:-.350px;line-height:15px">Replay</div>
<div class="a" style="left:882.500px;top:269px;width:144.500px;height:27.500px;border:1px solid #3e3e3e;border-radius:4px"></div>
<div class="a" style="left:972.500px;top:269px;width:1px;height:27.500px;background:#3e3e3e"></div>
<svg class="a" style="left:881.5px;top:268px" width="38.5" height="29.5" viewBox="0 0 38.5 29.5"><rect x="1.75" y="1.75" width="35.0" height="26.0" rx="4" fill="#3a3a3a" stroke="#d2d2d2" stroke-width="1.5"/></svg>
<div class="t" style="left:895px;top:277px;font-size:11px;color:#dcdcdc;line-height:12px;-webkit-text-stroke:.200px #dcdcdc">UI</div>
<div class="t" style="left:930.500px;top:277px;font-size:11px;color:#cecece;line-height:12px;letter-spacing:-.200px;-webkit-text-stroke:.150px #cecece">YAML</div>
<div class="t" style="left:985px;top:277px;font-size:11px;color:#cecece;line-height:12px;letter-spacing:-.150px;-webkit-text-stroke:.150px #cecece">JSON</div>
<div class="t" style="left:560.300px;top:314px;font-size:9px;color:#d01812;line-height:10px;font-weight:700">*</div>
<div class="t" style="left:569.500px;top:313px;font-size:11px;font-weight:700;color:#cacaca;letter-spacing:0.82px;line-height:12px">REPLAY FILE</div>
<div class="t" style="left:564px;top:339.500px;font-size:11.370px;color:#d2d2d2;line-height:13px">Enable this setting for continuous CSV file data replay; it restarts from the beginning once</div>
<div class="t" style="left:564px;top:359.600px;font-size:11.370px;color:#d2d2d2;line-height:13px">the end is reached, ensuring uninterrupted data flow.</div>
<svg class="a" style="left:559px;top:389.2px" width="233" height="38.7" viewBox="0 0 233 38.7"><rect x="1.75" y="1.75" width="229.5" height="35.2" rx="4" fill="#2a2a2a" stroke="#ececec" stroke-width="1.5"/></svg>
<svg class="a" style="left:574px;top:398.8px" width="20" height="20" viewBox="0 0 20 20"><circle cx="10" cy="10" r="7.05" fill="none" stroke="#f0f0f0" stroke-width="1.9"/><circle cx="10" cy="10" r="4.100" fill="#f4f4f4"/></svg>
<div class="t" style="left:599.500px;top:401.500px;font-size:13px;color:#e4e4e4;letter-spacing:-.300px;line-height:14px">Yes</div>
<div class="a" style="left:798.500px;top:390.200px;width:228.500px;height:36.600px;border-radius:4px;background:#2a2a2a"></div>
<svg class="a" style="left:811.3px;top:398px" width="20" height="20" viewBox="0 0 20 20"><circle cx="10" cy="10" r="7.25" fill="none" stroke="#dedede" stroke-width="1.5"/></svg>
<div class="t" style="left:836.500px;top:400.500px;font-size:13px;color:#e4e4e4;line-height:14px;letter-spacing:-.200px">No</div>
<div class="t" style="left:564px;top:434.800px;font-size:11.500px;color:#d0d0d0;line-height:12px">Default value: true</div>
<div class="t" style="left:560.300px;top:473.6px;font-size:9px;color:#d01812;line-height:10px;font-weight:700">*</div>
<div class="t" style="left:569.500px;top:472.6px;font-size:11px;font-weight:700;color:#cacaca;letter-spacing:1.1px;line-height:12px">TIMESTAMP</div>
<div class="a" style="left:562px;top:490px;width:463px;height:2px;background:#080808"></div>
<div class="a" style="left:562px;top:606px;width:463px;height:2.500px;background:#0a0a0a"></div>
<svg class="a" style="left:559px;top:490.5px" width="469" height="118.3" viewBox="0 0 469 118.3"><rect x="1.7" y="1.7" width="465.6" height="114.89999999999999" rx="2" fill="none" stroke="#e8e8e8" stroke-width="1.4"/></svg>
<svg class="a" style="left:574px;top:539px" width="20" height="20" viewBox="0 0 20 20"><circle cx="10" cy="10" r="7.05" fill="none" stroke="#f0f0f0" stroke-width="1.9"/><circle cx="10" cy="10" r="4.100" fill="#f4f4f4"/></svg>
<div class="t" style="left:607.500px;top:511px;font-size:14.300px;font-weight:700;color:#f4f4f4;line-height:16px">CSV Playback</div>
<div class="t" style="left:607.500px;top:532.6px;font-size:13.180px;color:#c2c2c2;line-height:15px">This mode adjusts the first CSV row's timestamp to the current time,</div>
<div class="t" style="left:607.500px;top:552.8px;font-size:13.180px;color:#c2c2c2;line-height:15px">maintaining intervals between data points, ensuring realistic time-</div>
<div class="t" style="left:607.500px;top:573.0px;font-size:13.180px;color:#c2c2c2;line-height:15px">sensitive data representation.</div>
<div class="a" style="left:560px;top:615px;width:467px;height:136.500px;border:1px solid #2b2b2b;border-radius:4px"></div>
<svg class="a" style="left:574px;top:673.4px" width="20" height="20" viewBox="0 0 20 20"><circle cx="10" cy="10" r="7.25" fill="none" stroke="#dedede" stroke-width="1.5"/></svg>
<div class="t" style="left:607.500px;top:634.500px;font-size:14.300px;font-weight:700;color:#f4f4f4;line-height:16px;letter-spacing:-.160px">Row Publish Rate</div>
<div class="t" style="left:607.500px;top:656.3px;font-size:13.180px;color:#c2c2c2;line-height:15px">Select this mode to uniformly publish data at a fixed interval,</div>
<div class="t" style="left:607.500px;top:676.5px;font-size:13.180px;color:#c2c2c2;line-height:15px">ignoring CSV file timestamps. It guarantees data flow at a consistent</div>
<div class="t" style="left:607.500px;top:696.8px;font-size:13.180px;color:#c2c2c2;line-height:15px">rate and simplicity where precise timing of original data is not</div>
<div class="t" style="left:607.500px;top:717.0px;font-size:13.180px;color:#c2c2c2;line-height:15px">essential.</div>
<div class="t" style="left:564px;top:759.500px;font-size:11.500px;color:#d0d0d0;line-height:12px;letter-spacing:-.050px">Default value: playback</div>
<div class="t" style="left:548.500px;top:872.600px;font-size:11px;color:#e2e2e2;line-height:12px;letter-spacing:-.100px"><b style="letter-spacing:-.300px">Progress:</b> 7 / 7 Steps</div>
<div class="a" style="left:555px;top:897.900px;width:175px;height:2.200px;background:#0ea552"></div>
<svg class="a" style="left:548.2px;top:892px" width="14" height="14" viewBox="0 0 14 14"><circle cx="7" cy="7" r="6.800" fill="#0ea552"/><path d="M4.200 7.200l2 1.900 3.600-3.900" fill="none" stroke="#d8f3e4" stroke-width="1.400"/></svg>
<svg class="a" style="left:577.2px;top:892px" width="14" height="14" viewBox="0 0 14 14"><circle cx="7" cy="7" r="6.800" fill="#0ea552"/><path d="M4.200 7.200l2 1.900 3.600-3.900" fill="none" stroke="#d8f3e4" stroke-width="1.400"/></svg>
<svg class="a" style="left:606.6px;top:892px" width="14" height="14" viewBox="0 0 14 14"><circle cx="7" cy="7" r="6.800" fill="#0ea552"/><path d="M4.200 7.200l2 1.900 3.600-3.900" fill="none" stroke="#d8f3e4" stroke-width="1.400"/></svg>
<svg class="a" style="left:635.6px;top:892px" width="14" height="14" viewBox="0 0 14 14"><circle cx="7" cy="7" r="6.800" fill="#0ea552"/><path d="M4.200 7.200l2 1.900 3.600-3.900" fill="none" stroke="#d8f3e4" stroke-width="1.400"/></svg>
<svg class="a" style="left:664.6px;top:892px" width="14" height="14" viewBox="0 0 14 14"><circle cx="7" cy="7" r="6.800" fill="#0ea552"/><path d="M4.200 7.200l2 1.900 3.600-3.900" fill="none" stroke="#d8f3e4" stroke-width="1.400"/></svg>
<svg class="a" style="left:693.8px;top:892px" width="14" height="14" viewBox="0 0 14 14"><circle cx="7" cy="7" r="6.800" fill="#0ea552"/><path d="M4.200 7.200l2 1.900 3.600-3.900" fill="none" stroke="#d8f3e4" stroke-width="1.400"/></svg>
<svg class="a" style="left:723.0px;top:892px" width="14" height="14" viewBox="0 0 14 14"><circle cx="7" cy="7" r="5.800" fill="#e4e4e4" stroke="#0ea552" stroke-width="2"/></svg>
<div class="t" style="left:785.500px;top:880.700px;font-size:13px;font-weight:700;color:#ececec;line-height:14px;letter-spacing:-.250px">Cancel</div>
<svg class="a" style="left:853.5px;top:868.2px" width="87.2" height="37.3" viewBox="0 0 87.2 37.3"><rect x="1.8" y="1.8" width="83.60000000000001" height="33.699999999999996" rx="4" fill="#1b1b1b" stroke="#dadada" stroke-width="1.6"/></svg>
<div class="t" style="left:871.500px;top:880.700px;font-size:13px;font-weight:700;color:#f0f0f0;line-height:14px;letter-spacing:-.450px">Previous</div>
<div class="a" style="left:951px;top:869.200px;width:84px;height:35.300px;border-radius:4px;background:#0057c8"></div>
<div class="t" style="left:967.500px;top:880.700px;font-size:13px;font-weight:700;color:#fff;line-height:14px;letter-spacing:-.230px">Connect</div>
</body></html>
